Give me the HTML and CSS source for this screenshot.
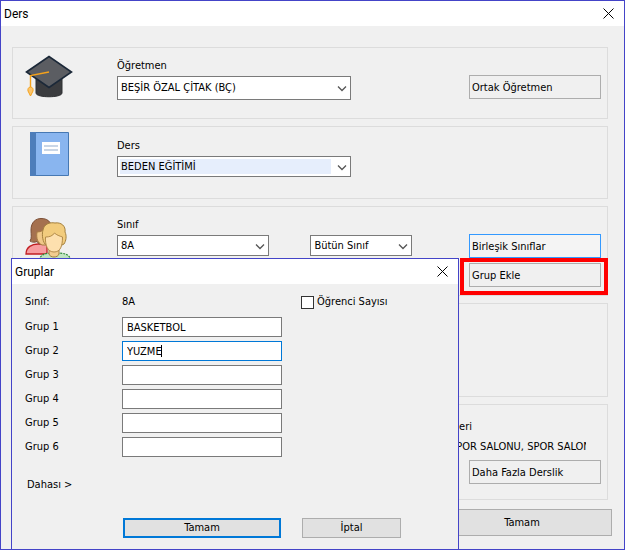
FILE: index.html
```
<!DOCTYPE html>
<html lang="tr">

<head>
    <meta charset="UTF-8">
    <meta name="viewport" content="width=device-width, initial-scale=1.0">
    <title>Ders</title>
    <link rel="stylesheet" href="styles.css">
</head>

<body>
    <div class="window">
        <div class="titlebar">
            <span>Ders</span>
            <button class="close" type="button" aria-label="Kapat">
                <svg width="11" height="11" viewBox="0 0 11 11"><path d="M.5 .5l10 10M10.5 .5l-10 10" /></svg>
            </button>
        </div>
        <div class="content">
            <div class="group group-teacher">
                <div class="icon">
                    <svg width="48" height="44" viewBox="0 0 48 44">
                        <path d="M11 23v15c0 5 26 5 26 0V23z" fill="#3b3c3f" stroke="#2f3033" stroke-width="1" />
                        <path d="M1.500 17L24 1.500 46.500 17 24 32.500z" fill="#5b5d62" stroke="#1b2838" stroke-width="1.600" />
                        <path d="M24 17L5.500 20.500V33" fill="none" stroke="#f5a21b" stroke-width="1.400" />
                        <path d="M5.500 32c-2 0-3 2-2.500 4l2.500 5 2.500-5c.5-2-.5-4-2.500-4z" fill="#fbc56d" stroke="#f5a21b" />
                    </svg>
                </div>
                <div class="field wide">
                    <label for="teacher">Öğretmen</label>
                    <div class="select">
                        <select id="teacher"><option>BEŞİR ÖZAL ÇİTAK (BÇ)</option></select>
                        <svg width="10" height="6" viewBox="0 0 10 6"><path d="M1 .5l4 4 4-4" /></svg>
                    </div>
                </div>
                <div class="actions">
                    <button class="btn" type="button">Ortak Öğretmen</button>
                </div>
            </div>

            <div class="group group-lesson">
                <div class="icon">
                    <svg width="48" height="46" viewBox="0 0 48 46">
                        <path d="M5.500 1.500h38v43h-38z" fill="#89b5ef" stroke="#4678b3" />
                        <path d="M5 1h6v44H5z" fill="#4d7dba" />
                        <path d="M17 11h18v12H17z" fill="#fff" />
                        <path d="M19 15h14M19 19h14" stroke="#b8c9de" stroke-width="1.300" />
                    </svg>
                </div>
                <div class="field wide">
                    <label for="lesson">Ders</label>
                    <div class="select">
                        <select id="lesson" class="selected"><option>BEDEN EĞİTİMİ</option></select>
                        <svg width="10" height="6" viewBox="0 0 10 6"><path d="M1 .5l4 4 4-4" /></svg>
                    </div>
                </div>
            </div>

            <div class="group group-class">
                <div class="icon">
                    <svg width="48" height="46" viewBox="0 0 48 46">
                        <path d="M1 37c0-7 6-10 12-10h9v10z" fill="#f79c9f" stroke="#c11e22" stroke-width="1.300" />
                        <path d="M5 24c2-3 1-6 1-11C6 5 11 1.500 16 1.500c4 0 7 1 9 4l-6 22c-4 0-6-1-7-3-2 1-5 1-7-.500z" fill="#a5714f" stroke="#7c4f36" />
                        <path d="M12 15c4 0 7-2 9-4l2 17h-6c-4-2-6-6-5-13z" fill="#f0c889" stroke="#a87b43" />
                        <path d="M14 46c0-10 8-10 16-10s16 0 16 10z" fill="#bfe3c0" stroke="#2f8a3a" stroke-width="1.200" stroke-dasharray="2 1" />
                        <path d="M24 30v7c1 4 9 4 10 0v-7z" fill="#f2cd90" stroke="#a3803f" />
                        <path d="M20 27C17 23 17 16 18 13c1-6 7-8 12-7 6-1 11 3 10 9 2 4 1 9-1 12l-4 2H23z" fill="#f2cc7d" stroke="#a3803f" />
                        <path d="M20.500 20c4 0 7-1 9-4 2 2 5 3 8 4 0 9-2 15-8.500 15s-9-7-8.500-15z" fill="#fde0ae" stroke="#b38b4b" />
                    </svg>
                </div>
                <div class="field">
                    <label for="class">Sınıf</label>
                    <div class="pair">
                        <div class="select">
                            <select id="class"><option>8A</option></select>
                            <svg width="10" height="6" viewBox="0 0 10 6"><path d="M1 .5l4 4 4-4" /></svg>
                        </div>
                        <div class="select">
                            <select aria-label="Sınıf bölümü"><option>Bütün Sınıf</option></select>
                            <svg width="10" height="6" viewBox="0 0 10 6"><path d="M1 .5l4 4 4-4" /></svg>
                        </div>
                    </div>
                </div>
                <div class="actions">
                    <button class="btn hot" type="button">Birleşik Sınıflar</button>
                    <div class="marked">
                        <button class="btn" type="button">Grup Ekle</button>
                    </div>
                </div>
            </div>

            <div class="group group-empty"></div>

            <div class="group group-rooms">
                <div class="rooms">
                    <div class="rooms-label">Derslikleri</div>
                    <div class="rooms-list">SPOR SALONU, SPOR SALONU</div>
                </div>
                <div class="actions">
                    <button class="btn" type="button">Daha Fazla Derslik</button>
                </div>
            </div>

            <div class="footer">
                <button class="btn solid" type="button">Tamam</button>
            </div>
        </div>

        <form class="dialog">
            <div class="titlebar">
                <span>Gruplar</span>
                <button class="close" type="button" aria-label="Kapat">
                    <svg width="11" height="11" viewBox="0 0 11 11"><path d="M.5 .5l10 10M10.5 .5l-10 10" /></svg>
                </button>
            </div>
            <div class="dialog-body">
                <div class="row head">
                    <span>Sınıf:</span>
                    <span>8A</span>
                    <label class="check"><input type="checkbox">Öğrenci Sayısı</label>
                </div>
                <div class="row">
                    <label for="g1">Grup 1</label>
                    <input id="g1" type="text" value="BASKETBOL">
                </div>
                <div class="row">
                    <label for="g2">Grup 2</label>
                    <div class="editing">
                        <input id="g2" type="text" value="YUZME">
                        <span class="caret"></span>
                    </div>
                </div>
                <div class="row">
                    <label for="g3">Grup 3</label>
                    <input id="g3" type="text">
                </div>
                <div class="row">
                    <label for="g4">Grup 4</label>
                    <input id="g4" type="text">
                </div>
                <div class="row">
                    <label for="g5">Grup 5</label>
                    <input id="g5" type="text">
                </div>
                <div class="row">
                    <label for="g6">Grup 6</label>
                    <input id="g6" type="text">
                </div>
                <button class="more" type="button">Dahası &gt;</button>
                <div class="buttons">
                    <button class="btn solid default" type="button">Tamam</button>
                    <button class="btn solid" type="button">İptal</button>
                </div>
            </div>
        </form>
    </div>
</body>

</html>
```
FILE: styles.css
```
* {
    box-sizing: border-box;
    margin: 0;
    padding: 0;
}

body,
button,
input,
select {
    font-family: "DejaVu Sans Condensed", "Noto Sans", sans-serif;
    font-size: 11px;
    line-height: 16px;
    color: #000;
}

.window {
    position: relative;
    min-height: 100vh;
    border: 1px solid #4444c8;
    background-color: #f0f0f0;
}

.titlebar {
    display: flex;
    justify-content: space-between;
    align-items: center;
    height: 25px;
    padding: 0 10px 0 3px;
    background-color: #fff;
    font-family: Roboto, sans-serif;
    font-size: 12px;
}

.close {
    display: flex;
    border: none;
    background: none;
}

.close svg {
    fill: none;
    stroke: #000;
}

.content {
    display: flex;
    flex-direction: column;
    gap: 7px;
    padding: 21px 16px 11px 11px;
}

.group {
    display: flex;
    border: 1px solid #dcdcdc;
}

.group-teacher {
    padding: 10px 6px 18px 12px;
}

.group-lesson {
    padding: 11px 6px 21px 12px;
}

.group-class {
    padding: 10px 6px 8px 12px;
}

.group-empty {
    padding: 46px 6px;
}

.group-rooms {
    flex-direction: column;
    padding: 14px 6px 15px 12px;
}

.icon {
    width: 92px;
    height: 40px;
}

.group-teacher .icon {
    margin-top: -3px;
}

.group-lesson .icon {
    margin-top: -7px;
}

.field {
    display: flex;
    flex-direction: column;
    gap: 2px;
    width: 295px;
}

.field.wide {
    width: 234px;
}

.pair {
    display: grid;
    grid-template-columns: 3fr 2fr;
    gap: 41px;
}

.select {
    position: relative;
}

.select svg {
    position: absolute;
    right: 4px;
    top: 50%;
    margin-top: -2px;
    fill: none;
    stroke: #555;
    stroke-width: 1.3;
    pointer-events: none;
}

select {
    display: block;
    width: 100%;
    height: 21px;
    padding: 2px 19px 2px 2px;
    border: 1px solid #7a7a7a;
    border-radius: 0;
    background-color: #fff;
    text-indent: 1px;
    appearance: none;
}

.group-teacher select {
    height: 24px;
}

select.selected {
    background: linear-gradient(#e6eefc, #e6eefc) content-box, #fff;
}

.actions {
    display: flex;
    flex-direction: column;
    gap: 5px;
    width: 132px;
    margin-left: auto;
    padding-top: 17px;
}

.group-rooms .actions {
    padding-top: 5px;
}

.btn {
    width: 100%;
    height: 24px;
    padding: 2px 2px 0;
    border: 1px solid #adadad;
    background-color: #f0f0f0;
    text-align: left;
}

.btn.hot {
    border-color: #3399ff;
    background-color: #f4f4f4;
}

.btn.solid {
    padding: 0;
    background-color: #e1e1e1;
    text-align: center;
}

.btn.default {
    border: 2px solid #0078d7;
}

/* red frame around the button */
.marked {
    position: relative;
}

.marked::after {
    content: "";
    position: absolute;
    inset: -5px -7px -8px -9px;
    border: 4px solid #f00;
    pointer-events: none;
}

.rooms {
    width: 136px;
    margin: 0 15px 0 auto;
}

.rooms-label {
    width: 22px;
    direction: rtl;
    white-space: nowrap;
    margin-bottom: 4px;
}

.rooms-list {
    overflow: hidden;
    white-space: nowrap;
}

.footer {
    display: flex;
    justify-content: flex-end;
    margin: 2px -4px 0 0;
}

.footer .btn {
    width: 180px;
    height: 27px;
}

.dialog {
    position: absolute;
    left: 10px;
    bottom: -1px;
    width: 448px;
    border: 1px solid #4444c8;
    background-color: #f0f0f0;
}

.dialog-body {
    display: flex;
    flex-direction: column;
    gap: 4px;
    padding: 8px 14px 11px 13px;
}

.row {
    display: grid;
    grid-template-columns: 97px 160px 1fr;
    align-items: center;
    min-height: 20px;
}

.head {
    margin-bottom: 1px;
}

.check {
    display: flex;
    align-items: center;
    gap: 3px;
    margin-left: 19px;
}

.check input {
    width: 13px;
    height: 13px;
    border: 1px solid #333;
    background-color: #fff;
    appearance: none;
}

input[type="text"] {
    display: block;
    width: 100%;
    height: 20px;
    padding: 0 4px;
    border: 1px solid #7a7a7a;
    background-color: #fff;
    outline: none;
}

.editing {
    position: relative;
}

.editing input[type="text"] {
    border-color: #0078d7;
}

.caret {
    position: absolute;
    left: 39px;
    top: 4px;
    width: 1px;
    height: 12px;
    background-color: #000;
}

.more {
    align-self: flex-start;
    margin: 16px 0 21px 2px;
    border: none;
    background: none;
}

.buttons {
    display: flex;
    gap: 21px;
    padding-left: 98px;
}

.buttons .btn {
    width: 99px;
    height: 20px;
}

.buttons .btn.default {
    width: 158px;
}
```
